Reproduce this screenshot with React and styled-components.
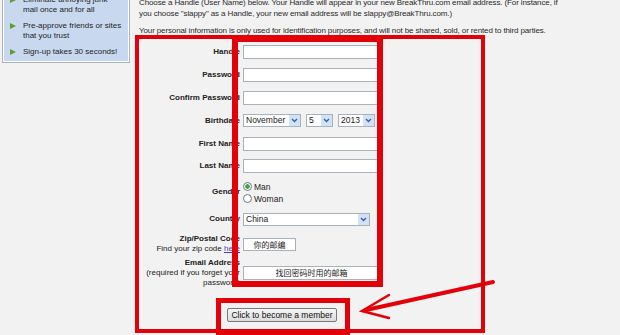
import React from "react";
import styled, { createGlobalStyle } from "styled-components";

const Global = createGlobalStyle`
  html, body {
    margin: 0;
    padding: 0;
    background: #f2f2f2;
  }
  body {
    font-family: "Liberation Sans", Arial, sans-serif;
    font-size: 8px;
    color: #222;
  }
`;

const Page = styled.div`
  position: relative;
  width: 620px;
  height: 335px;
  overflow: hidden;
  display: flex;
  align-items: flex-start;
`;

const Sidebar = styled.div`
  box-sizing: border-box;
  margin: -10px 0 0 2px;
  width: 128px;
  flex: none;
  border: 1px solid #aab3c2;
  box-shadow: inset 0 0 0 1px #fff;
  background: #c8d8ee;
  padding: 4px 4px 5px 7px;
  display: flex;
  flex-direction: column;
  gap: 6px;
`;

const Perk = styled.div`
  display: flex;
  gap: 7px;
  line-height: 10px;
  color: #1e1e1e;
`;

const Bullet = styled.span`
  flex: none;
  margin-top: 2px;
  width: 0;
  height: 0;
  border-top: 3px solid transparent;
  border-bottom: 3px solid transparent;
  border-left: 6px solid #5f9d2c;
`;

const Main = styled.div`
  margin: -3px 0 0 9px;
  width: 470px;
  flex: none;
`;

const Intro = styled.p`
  margin: 0 0 ${(p) => p.$gap}px;
  line-height: 11px;
  letter-spacing: -0.12px;
  color: #2a2a2a;
`;

const Form = styled.div`
  display: grid;
  grid-template-columns: 101px 140px;
  column-gap: 3px;
  align-items: center;
`;

const Label = styled.div`
  text-align: right;
  font-weight: bold;
  line-height: 10px;
  min-height: ${(p) => p.$h}px;
  display: flex;
  flex-direction: column;
  justify-content: center;
  align-items: flex-end;
  white-space: nowrap;
  span {
    font-weight: normal;
  }
  a {
    color: #4a3fc4;
    text-decoration: underline;
    font-weight: normal;
  }
`;

const Field = styled.div`
  display: flex;
  align-items: center;
  gap: 5px;
`;

const TextInput = styled.div`
  box-sizing: border-box;
  width: ${(p) => p.$w || 137}px;
  height: ${(p) => p.$h || 14}px;
  border: 1px solid #a9b1bb;
  background: #fff;
  font-family: "Noto Sans CJK SC", "Liberation Sans", sans-serif;
  font-size: 8px;
  line-height: ${(p) => (p.$h || 14) - 2}px;
  text-align: center;
  color: #222;
`;

const Select = styled.div`
  box-sizing: border-box;
  width: ${(p) => p.$w}px;
  height: 13px;
  border: 1px solid #a9b1bb;
  background: #fff;
  display: flex;
  align-items: stretch;
  justify-content: space-between;
  line-height: 11px;
  font-size: 8.5px;
  padding-left: 2px;
`;

const Drop = styled.span`
  width: 11px;
  background: #d3e1f4;
  display: flex;
  align-items: center;
  justify-content: center;
`;

const Radios = styled.div`
  display: flex;
  flex-direction: column;
  gap: 2px;
  padding-top: 1px;
`;

const Radio = styled.label`
  display: flex;
  align-items: center;
  gap: 2px;
  line-height: 10px;
  font-size: 8.5px;
  &::before {
    content: "";
    box-sizing: border-box;
    width: 9px;
    height: 9px;
    border-radius: 50%;
    border: 1px solid #6f7b8a;
    background: ${(p) =>
      p.$on ? "radial-gradient(circle, #39a83a 0 2px, #fff 2.5px)" : "#fff"};
  }
`;

const ButtonRow = styled.div`
  padding: 19px 0 0 88px;
`;

const Button = styled.button`
  box-sizing: border-box;
  width: 110px;
  height: 14px;
  padding: 0;
  border: 1px solid #7a7a7a;
  border-radius: 2px;
  background: linear-gradient(#f6f6f6, #dcdcdc);
  font-family: "Liberation Sans", Arial, sans-serif;
  font-size: 8.5px;
  color: #111;
  line-height: 12px;
`;

const Mark = styled.div`
  position: absolute;
  box-sizing: border-box;
  left: ${(p) => p.$x}px;
  top: ${(p) => p.$y}px;
  width: ${(p) => p.$w}px;
  height: ${(p) => p.$h}px;
  border: ${(p) => p.$b}px solid #e30008;
  pointer-events: none;
`;

const Overlay = styled.svg`
  position: absolute;
  left: 0;
  top: 0;
  pointer-events: none;
`;

const Chevron = () => (
  <svg width="7" height="5" viewBox="0 0 7 5">
    <polyline points="1,1 3.5,3.5 6,1" fill="none" stroke="#2f5fb0" strokeWidth="1.4" />
  </svg>
);

const Dropdown = ({ w, children }) => (
  <Select $w={w}>
    <span>{children}</span>
    <Drop>
      <Chevron />
    </Drop>
  </Select>
);

export default function App() {
  return (
    <>
      <Global />
      <Page>
        <Sidebar>
          <Perk>
            <Bullet />
            <span>
              Eliminate annoying junk
              <br />
              mail once and for all
            </span>
          </Perk>
          <Perk>
            <Bullet />
            <span>
              Pre-approve friends or sites
              <br />
              that you trust
            </span>
          </Perk>
          <Perk>
            <Bullet />
            <span>Sign-up takes 30 seconds!</span>
          </Perk>
        </Sidebar>
        <Main>
          <Intro $gap={6}>
            Choose a Handle (User Name) below. Your Handle will appear in your new BreakThru.com email address. (For instance, if
            <br />
            you choose "slappy" as a Handle, your new email address will be slappy@BreakThru.com.)
          </Intro>
          <Intro $gap={4}>
            Your personal information is only used for identification purposes, and will not be shared, sold, or rented to third parties.
          </Intro>
          <Form>
            <Label $h={23}>Handle</Label>
            <Field><TextInput /></Field>
            <Label $h={23}>Password</Label>
            <Field><TextInput /></Field>
            <Label $h={23}>Confirm Password</Label>
            <Field><TextInput /></Field>
            <Label $h={23}>Birthdate</Label>
            <Field>
              <Dropdown w={58}>November</Dropdown>
              <Dropdown w={27}>5</Dropdown>
              <Dropdown w={37}>2013</Dropdown>
            </Field>
            <Label $h={23}>First Name</Label>
            <Field><TextInput /></Field>
            <Label $h={22}>Last Name</Label>
            <Field><TextInput /></Field>
            <Label $h={30}>Gender</Label>
            <Radios>
              <Radio $on>Man</Radio>
              <Radio>Woman</Radio>
            </Radios>
            <Label $h={24}>Country</Label>
            <Field><Dropdown w={127}>China</Dropdown></Field>
            <Label $h={26}>
              Zip/Postal Code
              <span>
                Find your zip code <a>here</a>
              </span>
            </Label>
            <Field><TextInput $w={53} $h={13}>你的邮编</TextInput></Field>
            <Label $h={32}>
              Email Address
              <span>(required if you forget your</span>
              <span>password)</span>
            </Label>
            <Field><TextInput>找回密码时用的邮箱</TextInput></Field>
          </Form>
          <ButtonRow>
            <Button>Click to become a member</Button>
          </ButtonRow>
        </Main>

        <Mark $x={135} $y={35} $w={350} $h={298} $b={4} />
        <Mark $x={232} $y={36} $w={151} $h={251} $b={6} />
        <Mark $x={216} $y={298} $w={134} $h={40} $b={5} />
        <Overlay width="620" height="335" viewBox="0 0 620 335">
          <g stroke="#e30008" fill="none" strokeLinecap="round">
            <line x1="493" y1="282" x2="366" y2="310" strokeWidth="4" />
            <polyline points="389,295 362,311 389,318" strokeWidth="2.5" strokeLinejoin="miter" />
          </g>
        </Overlay>
      </Page>
    </>
  );
}
